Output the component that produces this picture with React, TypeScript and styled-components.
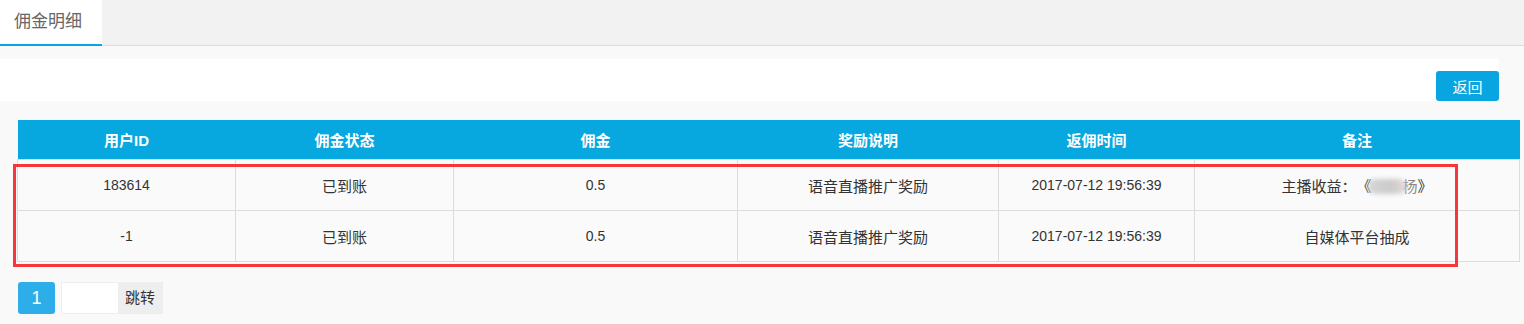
import React from 'react';
import styled, { createGlobalStyle } from 'styled-components';

const GlobalStyle = createGlobalStyle`
  body {
    margin: 0;
    background: #f9f9f9;
    font-family: "Liberation Sans", Arial, "Noto Sans CJK SC", sans-serif;
    font-size: 14px;
    color: #333;
    text-spacing-trim: space-all;
  }
`;

const TabBar = styled.div`
  display: flex;
  height: 46px;
  box-sizing: border-box;
  background: #f2f2f2;
  border-bottom: 1px solid #dcdcdc;
`;

const Tab = styled.div<{ active?: boolean }>`
  width: 102px;
  height: 46px;
  box-sizing: border-box;
  padding-left: 14px;
  line-height: 43px;
  font-size: 17px;
  color: #666;
  background: ${p => (p.active ? '#fff' : 'transparent')};
  border-bottom: 2px solid ${p => (p.active ? '#08a5e0' : 'transparent')};
`;

const Content = styled.div`
  padding-top: 13px;
`;

const Toolbar = styled.div`
  display: flex;
  justify-content: flex-end;
  align-items: flex-end;
  height: 42px;
  margin-right: 25px;
  background: #fff;
`;

const Button = styled.button`
  width: 63px;
  height: 30px;
  border: 0;
  border-radius: 3px;
  background: #08a5e0;
  color: #fff;
  font-family: inherit;
  font-size: 15px;
  padding: 0;
`;

const TableWrap = styled.div`
  position: relative;
  margin: 19px 5px 0 17px;
`;

const Table = styled.table`
  width: 100%;
  border-collapse: collapse;
  table-layout: fixed;
`;

const Th = styled.th`
  height: 39px;
  padding: 0;
  background: #07a7df;
  color: #fff;
  font-weight: bold;
  font-size: 15px;
  text-align: center;
`;

const Td = styled.td<{ cjk?: boolean }>`
  height: 50px;
  padding: 0;
  border: 1px solid #dcdcdc;
  background: #fafafa;
  text-align: center;
  color: #333;
  font-size: ${p => (p.cjk ? '15px' : '14px')};
`;

const Blur = styled.span`
  display: inline-block;
  width: 38px;
  height: 15px;
  vertical-align: -2px;
  margin-left: -3px;
  border-radius: 7px;
  background: linear-gradient(90deg, #d6d6d6, #cbcbcb 60%, #e6d6da);
  filter: blur(2px);
`;

const Faded = styled.span`
  color: #888;
  margin-left: -4px;
`;

// annotation frame drawn over the data rows
const Highlight = styled.div`
  position: absolute;
  left: -4px;
  top: 44px;
  width: 1445px;
  height: 103px;
  box-sizing: border-box;
  border: 3px solid #f5363a;
  pointer-events: none;
`;

const Pager = styled.div`
  display: flex;
  gap: 6px;
  margin: 20px 0 0 18px;
`;

const PageNum = styled.div`
  width: 37px;
  height: 32px;
  border-radius: 3px;
  background: #2eaee8;
  color: #fff;
  font-size: 18px;
  line-height: 32px;
  text-align: center;
`;

const Jump = styled.div`
  display: flex;
  height: 32px;
  box-sizing: border-box;
  border: 1px solid #eee;
`;

const JumpInput = styled.div`
  width: 56px;
  background: #fff;
`;

const JumpButton = styled.div`
  width: 44px;
  background: #eee;
  color: #333;
  font-size: 15px;
  line-height: 30px;
  text-align: center;
`;

const columns = [
  { title: '用户ID', width: 218 },
  { title: '佣金状态', width: 218 },
  { title: '佣金', width: 284 },
  { title: '奖励说明', width: 261 },
  { title: '返佣时间', width: 196 },
  { title: '备注', width: 325 },
];

const rows = [
  { id: '183614', status: '已到账', amount: '0.5', desc: '语音直播推广奖励', time: '2017-07-12 19:56:39', note: 'anchor' },
  { id: '-1', status: '已到账', amount: '0.5', desc: '语音直播推广奖励', time: '2017-07-12 19:56:39', note: '自媒体平台抽成' },
];

export default function App() {
  return (
    <>
      <GlobalStyle />
      <TabBar>
        <Tab active>佣金明细</Tab>
      </TabBar>
      <Content>
        <Toolbar>
          <Button>返回</Button>
        </Toolbar>
        <TableWrap>
          <Table>
            <colgroup>
              {columns.map(c => (
                <col key={c.title} style={{ width: c.width }} />
              ))}
            </colgroup>
            <thead>
              <tr>
                {columns.map(c => (
                  <Th key={c.title}>{c.title}</Th>
                ))}
              </tr>
            </thead>
            <tbody>
              {rows.map(r => (
                <tr key={r.id}>
                  <Td>{r.id}</Td>
                  <Td cjk>{r.status}</Td>
                  <Td>{r.amount}</Td>
                  <Td cjk>{r.desc}</Td>
                  <Td>{r.time}</Td>
                  <Td cjk>
                    {r.note === 'anchor' ? (
                      <>
                        主播收益：《<Blur />
                        <Faded>杨</Faded>》
                      </>
                    ) : (
                      r.note
                    )}
                  </Td>
                </tr>
              ))}
            </tbody>
          </Table>
          <Highlight />
        </TableWrap>
        <Pager>
          <PageNum>1</PageNum>
          <Jump>
            <JumpInput />
            <JumpButton>跳转</JumpButton>
          </Jump>
        </Pager>
      </Content>
    </>
  );
}
